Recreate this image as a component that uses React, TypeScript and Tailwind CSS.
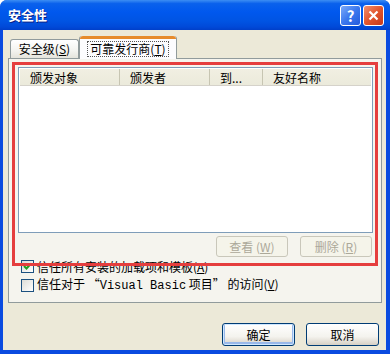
import React from "react";

const font = { fontFamily: '"Noto Sans CJK SC", "DejaVu Sans", sans-serif' };

function XpButton({
  children,
  disabled,
  primary,
  className = "",
}: {
  children: React.ReactNode;
  disabled?: boolean;
  primary?: boolean;
  className?: string;
}) {
  if (disabled) {
    return (
      <div
        className={`flex h-[21px] w-[72px] items-center justify-center rounded-[3px] border border-[#C9C7BA] bg-[#F5F4EA] text-[12px] text-[#ACA899] ${className}`}
      >
        {children}
      </div>
    );
  }
  return (
    <div
      className={`flex h-[23px] w-[73px] items-center justify-center rounded-[3px] border border-[#003C74] bg-[linear-gradient(to_bottom,#FFFFFF_0%,#F4F3EE_60%,#D6D0C5_100%)] text-[12px] text-black ${
        primary ? "shadow-[inset_0_0_0_1px_#CEE7FF,inset_0_-1px_0_2px_#98B8EA]" : ""
      } ${className}`}
    >
      {children}
    </div>
  );
}

function Checkbox({ checked }: { checked?: boolean }) {
  return (
    <div className="flex h-[13px] w-[13px] shrink-0 items-center justify-center border border-[#1C5180] bg-[linear-gradient(135deg,#DCDCD7_0%,#FFFFFF_100%)]">
      {checked && (
        <svg width="9" height="9" viewBox="0 0 9 9">
          <path d="M1 4 L3.5 6.5 L8 1.5" fill="none" stroke="#21A121" strokeWidth="2" />
        </svg>
      )}
    </div>
  );
}

export default function App() {
  const cols = [
    { label: "颁发对象", w: "w-[100px]" },
    { label: "颁发者", w: "w-[90px]" },
    { label: "到...", w: "w-[53px]" },
    { label: "友好名称", w: "flex-1" },
  ];

  return (
    <div
      className="flex h-[354px] w-[390px] flex-col overflow-hidden rounded-t-[7px] bg-[#0A4BE0]"
      style={font}
    >
      {/* title bar */}
      <div className="flex h-[30px] shrink-0 items-center bg-[linear-gradient(to_bottom,#3C8EF3_0%,#0A61EC_12%,#0058EE_40%,#0054E3_70%,#0049D8_90%,#003FC9_100%)] pl-[8px] pr-[6px]">
        <span className="flex-1 text-[13px] font-bold text-white [text-shadow:1px_1px_0_#0A1F85]">
          安全性
        </span>
        <div className="mr-[2px] flex h-[21px] w-[21px] items-center justify-center rounded-[3px] border border-white bg-[linear-gradient(135deg,#7BAAF8_0%,#3B78EE_50%,#2459DC_100%)] text-[15px] font-bold leading-none text-white">
          ?
        </div>
        <div className="flex h-[21px] w-[21px] items-center justify-center rounded-[3px] border border-white bg-[linear-gradient(135deg,#F0906F_0%,#E2552D_50%,#C7391A_100%)]">
          <svg width="11" height="11" viewBox="0 0 11 11">
            <path d="M1.5 1.5 L9.5 9.5 M9.5 1.5 L1.5 9.5" stroke="white" strokeWidth="2.2" />
          </svg>
        </div>
      </div>

      {/* body */}
      <div className="mb-[4px] ml-[3px] mr-[4px] flex flex-1 flex-col bg-[#ECE9D8] px-[5px] pt-[6px]">
        {/* tabs */}
        <div className="relative z-10 flex h-[22px] items-end pl-[2px]">
          <div className="flex h-[19px] w-[69px] items-center justify-center rounded-t-[3px] border border-b-0 border-[#919B9C] bg-[linear-gradient(to_bottom,#FFFFFF_0%,#F3F3EF_60%,#E5E4DC_100%)] text-[12px]">
            安全级(<u>S</u>)
          </div>
          <div className="-mb-px flex h-[23px] w-[98px] flex-col rounded-t-[3px] border-x border-[#919B9C] bg-[#FCFCFE]">
            <div className="h-[3px] rounded-t-[3px] bg-[#E68B2C]" />
            <div className="flex flex-1 items-center justify-center">
              <span className="border border-dotted border-[#555] px-[2px] text-[12px] leading-[14px]">
                可靠发行商(<u>T</u>)
              </span>
            </div>
          </div>
        </div>

        {/* panel */}
        <div className="relative flex h-[245px] w-[374px] flex-col border border-[#919B9C] bg-[#F5F4EE] pl-[9px] pr-[8px] pt-[8px]">
          {/* list view */}
          <div className="flex h-[166px] flex-col border border-[#7F9DB9] bg-white p-px">
            <div className="flex h-[17px] border-b border-[#D5D2CA] bg-[linear-gradient(to_bottom,#F1EFE2_0%,#EBEADB_100%)] text-[12px] leading-[17px]">
              {cols.map((c, i) => (
                <div
                  key={c.label}
                  className={`${c.w} ${i < 3 ? "border-r border-[#C7C5B2]" : ""} pl-[10px]`}
                >
                  {c.label}
                </div>
              ))}
            </div>
            <div className="flex-1" />
          </div>

          <div className="mr-[1px] mt-[3px] flex justify-end gap-[12px]">
            <XpButton disabled>
              查看 (<u>W</u>)
            </XpButton>
            <XpButton disabled>
              删除 (<u>R</u>)
            </XpButton>
          </div>

          <div className="ml-[3px] mt-[3px] flex flex-col gap-[4px] text-[12px] leading-[13px]">
            <div className="flex items-center gap-[3px]">
              <Checkbox checked />
              <span>
                信任所有安装的加载项和模板(<u>A</u>)
              </span>
            </div>
            <div className="flex items-center gap-[3px]">
              <Checkbox />
              <span>
                信任对于 “<span style={{ fontFamily: '"Liberation Mono", monospace' }}>Visual Basic</span> 项目” 的访问(<u>V</u>)
              </span>
            </div>
          </div>

          {/* red highlight annotation */}
          <div className="pointer-events-none absolute left-[3px] top-[3px] h-[204px] w-[366px] border-[3px] border-[#E53E3E]" />
        </div>

        {/* dialog buttons */}
        <div className="mr-[2px] mt-[20px] flex justify-end gap-[11px]">
          <XpButton primary>确定</XpButton>
          <XpButton>取消</XpButton>
        </div>
      </div>
    </div>
  );
}
